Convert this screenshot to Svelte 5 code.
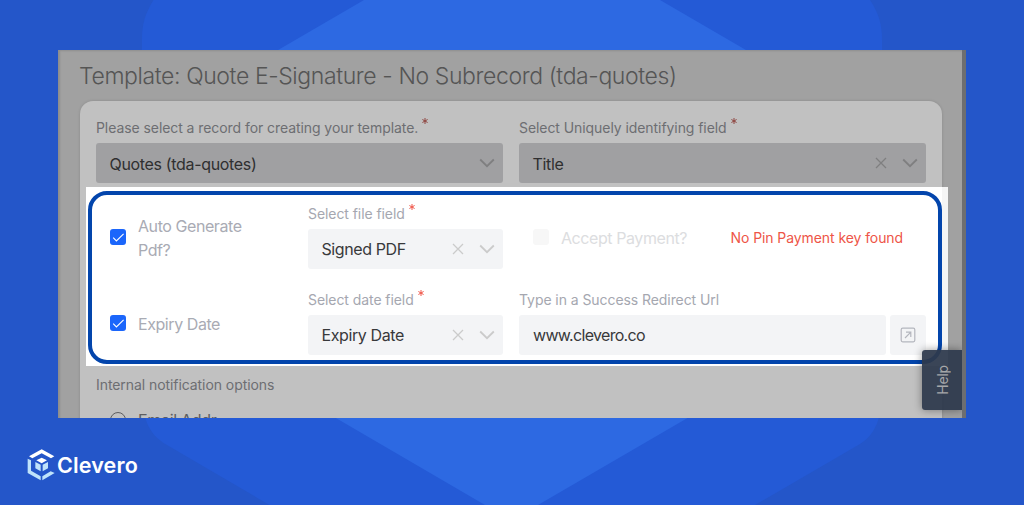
<script lang="ts">
  /**
   * Template settings card with the signing options highlighted,
   * shown on the branded Clevero backdrop.
   */

  const recordName = 'Quotes (tda-quotes)';
  const redirectUrl = 'www.clevero.co';

  let autoGenerate = $state(true);
  let hasExpiry = $state(true);
</script>

{#snippet label(text: string, required: boolean)}
  <div class="label">
    <span>{text}</span>
    {#if required}
      <svg class="required" width="6" height="6" viewBox="0 0 6 6" stroke="currentColor">
        <path d="M3 0v6M.4 1.5l5.2 3M5.6 1.5l-5.2 3" />
      </svg>
    {/if}
  </div>
{/snippet}

{#snippet select(value: string, clearable: boolean)}
  <div class="select">
    <span class="value">{value}</span>
    {#if clearable}
      <svg class="clear" width="12" height="12" viewBox="0 0 12 12" fill="none" stroke="currentColor" stroke-width="1.3">
        <path d="M1 1l10 10M11 1L1 11" />
      </svg>
    {/if}
    <svg class="chevron" width="16" height="10" viewBox="0 0 16 10" fill="none" stroke="currentColor" stroke-width="1.8">
      <path d="M1.2 1.5L8 8.2l6.8-6.7" />
    </svg>
  </div>
{/snippet}

{#snippet checkbox(checked: boolean)}
  <span class="checkbox" class:checked>
    {#if checked}
      <svg width="16" height="16" viewBox="0 0 16 16" fill="none" stroke="#fff" stroke-width="1.1">
        <path d="M3.2 8.7l3.2 3.2 7.2-7" />
      </svg>
    {/if}
  </span>
{/snippet}

<main class="stage">
  <svg class="backdrop" width="1024" height="505" viewBox="0 0 1024 505">
    <path
      fill="#245ad6"
      d="M153.5 0C145 14 142 24 142 40V388C142 418 148 434 167 445L269.5 505H755L860 444C876 434 882 418 882 388V40C882 24 879 14 870 0Z"
    />
    <path fill="#2d69e2" d="M364 0L192 100V334L485 505H538L832 334V100L660 0Z" />
  </svg>

  <section class="window">
    <h1>Template: Quote E-Signature - No Subrecord (tda-quotes)</h1>

    <div class="card">
      <div class="record-row">
        <div class="field">
          {@render label('Please select a record for creating your template.', true)}
          {@render select(recordName, false)}
        </div>
        <div class="field">
          {@render label('Select Uniquely identifying field', true)}
          {@render select('Title', true)}
        </div>
      </div>

      <div class="highlight">
        <div class="options">
          <div class="option">
            {@render checkbox(autoGenerate)}
            <span class="option-text">Auto Generate Pdf?</span>
          </div>
          <div class="field">
            {@render label('Select file field', true)}
            {@render select('Signed PDF', true)}
          </div>
          <div class="payment">
            {@render checkbox(false)}
            <span class="payment-text">Accept Payment?</span>
            <span class="error">No Pin Payment key found</span>
          </div>

          <div class="option">
            {@render checkbox(hasExpiry)}
            <span class="option-text">Expiry Date</span>
          </div>
          <div class="field">
            {@render label('Select date field', true)}
            {@render select('Expiry Date', true)}
          </div>
          <div class="field">
            {@render label('Type in a Success Redirect Url', false)}
            <div class="url-row">
              <div class="url">{redirectUrl}</div>
              <div class="open">
                <svg width="16" height="16" viewBox="0 0 16 16" fill="none" stroke="currentColor">
                  <rect x="1.2" y="1.2" width="13.6" height="13.6" rx="1.5" stroke-width="1.2" />
                  <path d="M5 11l5.6-5.6M6 5.2h4.8V10" stroke-width="1.2" />
                </svg>
              </div>
            </div>
          </div>
        </div>
      </div>

      <div class="notifications">
        {@render label('Internal notification options', false)}
        <div class="radio-row">
          <span class="radio"></span>
          <span>Email Addr</span>
        </div>
      </div>
    </div>

    <div class="help"><span>Help</span></div>
  </section>

  <div class="brand">
    <svg width="28" height="32" viewBox="80 58 84 96">
      <path fill="#fff" d="M86 80l38-21 38 21-10 6-28-15-28 15z" />
      <path fill="#bfe3fb" d="M82 87l10 5v31l29 17v12l-39-22zM126 152v-12l25-15 12 5z" />
      <path fill="#fff" d="M108 92l16-8 16 8-16 9z" />
      <path fill="#bfe3fb" d="M105 97l16 8v20l-16-9zM143 97l-16 8v20l16-9z" />
    </svg>
    <span>Clevero</span>
  </div>
</main>

<style>
  :global(body) {
    margin: 0;
  }

  .stage {
    position: relative;
    box-sizing: border-box;
    width: 1024px;
    height: 505px;
    padding: 50px 0 0 58px;
    overflow: hidden;
    background: #2456c9;
    font-family: Inter, 'Liberation Sans', sans-serif;
  }

  .backdrop {
    position: absolute;
    inset: 0;
  }

  .window {
    position: relative;
    box-sizing: border-box;
    width: 908px;
    height: 368px;
    padding: 0 20px 0 22px;
    border-right: 4px solid #6d6e70;
    overflow: hidden;
    background: #a1a1a1;
    box-shadow: inset 2px 1px 2px rgba(0, 0, 0, 0.12);
  }

  h1 {
    margin: 0 0 0 -1px;
    height: 51px;
    line-height: 52px;
    font-size: 23px;
    font-weight: 300;
    letter-spacing: -0.39px;
    color: #555;
    white-space: nowrap;
  }

  .card {
    width: 862px;
    height: 330px;
    border-radius: 13px 13px 0 0;
    background: #c1c1c1;
    box-shadow: 0 0 3px rgba(0, 0, 0, 0.15);
  }

  .record-row {
    display: grid;
    grid-template-columns: 1fr 1fr;
    gap: 16px;
    height: 67px;
    padding: 19px 16px 0;
  }

  .field {
    display: flex;
    flex-direction: column;
  }

  .label {
    display: flex;
    gap: 4px;
    height: 24px;
    line-height: 17px;
    font-size: 14px;
    letter-spacing: -0.07px;
    color: #a5a7b0;
    white-space: nowrap;
  }

  .record-row .label,
  .notifications .label {
    color: #6d6e72;
    line-height: 16px;
  }

  .record-row .label {
    height: 23px;
  }

  .required {
    color: #f0574a;
    margin-top: -1px;
  }

  .record-row .required {
    color: #8f4540;
    margin-top: -2px;
  }

  .select {
    display: flex;
    align-items: center;
    box-sizing: border-box;
    height: 40px;
    padding: 0 8px 0 13.5px;
    border-radius: 3px;
    background: #f3f4f6;
    font-size: 16px;
    letter-spacing: -0.4px;
    color: #38393b;
  }

  .record-row .select {
    background: #a0a0a2;
    color: #2f2f30;
    letter-spacing: -0.33px;
  }

  .value {
    flex: 1;
  }

  .record-row .value {
    padding-top: 1px;
  }

  .clear,
  .chevron {
    color: #cbcbcb;
  }

  .clear {
    margin-right: 15px;
  }

  .record-row .clear,
  .record-row .chevron {
    color: #7f7f80;
  }

  .highlight {
    width: 854px;
    height: 173px;
    margin-left: 6px;
    padding: 4px 6px 2px 2px;
    background: linear-gradient(to right, #fff 856px, #f5f5f5 856px);
  }

  .options {
    display: grid;
    grid-template-columns: 198px 195px 407px;
    grid-template-rows: 65px 64px;
    row-gap: 21px;
    box-sizing: border-box;
    width: 854px;
    height: 173px;
    padding: 10px 0 0 18px;
    border: 4px solid #0345ac;
    border-radius: 19px;
    background: #fff;
  }

  .options > :nth-child(3n) {
    margin-left: 16px;
    margin-right: -16px;
  }

  .option,
  .payment {
    display: flex;
    align-items: center;
    height: 64px;
  }

  .checkbox {
    flex: none;
    width: 16px;
    height: 16px;
    border-radius: 3px;
    background: #f7f7f7;
  }

  .checkbox.checked {
    background: #1b66fb;
  }

  .checkbox svg {
    display: block;
  }

  .option-text {
    width: 110px;
    margin-left: 12px;
    padding-top: 1px;
    line-height: 24px;
    font-size: 16px;
    letter-spacing: -0.43px;
    color: #a9abb4;
  }

  .payment {
    padding-left: 14px;
  }

  .payment-text {
    width: 169.5px;
    margin-left: 12px;
    padding-top: 2px;
    font-size: 16px;
    letter-spacing: -0.42px;
    color: #dcdde0;
  }

  .error {
    font-size: 14px;
    letter-spacing: -0.08px;
    color: #ee5547;
    white-space: nowrap;
  }

  .url-row {
    display: flex;
    gap: 4px;
    height: 40px;
  }

  .url {
    flex: 1;
    padding-left: 14px;
    border-radius: 3px;
    background: #f3f4f6;
    line-height: 40px;
    font-size: 16px;
    letter-spacing: -0.68px;
    color: #38393b;
  }

  .open {
    display: flex;
    align-items: center;
    justify-content: center;
    width: 36px;
    border-radius: 3px;
    background: #f3f4f6;
    color: #b4b6be;
  }

  .notifications {
    padding: 11px 16px 0;
  }

  .radio-row {
    display: flex;
    align-items: center;
    gap: 12px;
    height: 24px;
    margin: 7px 0 0 14px;
    font-size: 16px;
    letter-spacing: -0.3px;
    color: #5d5e61;
  }

  .radio {
    box-sizing: border-box;
    width: 16px;
    height: 16px;
    border: 1.5px solid #5d5e61;
    border-radius: 50%;
  }

  /* Floating tab over the corner of the card */
  .help {
    position: absolute;
    right: 0;
    bottom: 8px;
    display: flex;
    align-items: center;
    justify-content: center;
    width: 40px;
    height: 60px;
    border-radius: 3px 0 0 3px;
    background: rgba(46, 57, 77, 0.94);
    box-shadow: 0 0 8px rgba(0, 0, 0, 0.4);
    font-size: 14px;
    letter-spacing: -0.2px;
    color: #a6a7a9;
  }

  .help span {
    writing-mode: vertical-rl;
    transform: rotate(180deg);
  }

  .brand {
    position: relative;
    display: flex;
    align-items: center;
    gap: 2px;
    margin: 31px 0 0 -31px;
    font-size: 21.5px;
    font-weight: 600;
    letter-spacing: 0.15px;
    line-height: 32px;
    color: #fff;
  }
</style>
